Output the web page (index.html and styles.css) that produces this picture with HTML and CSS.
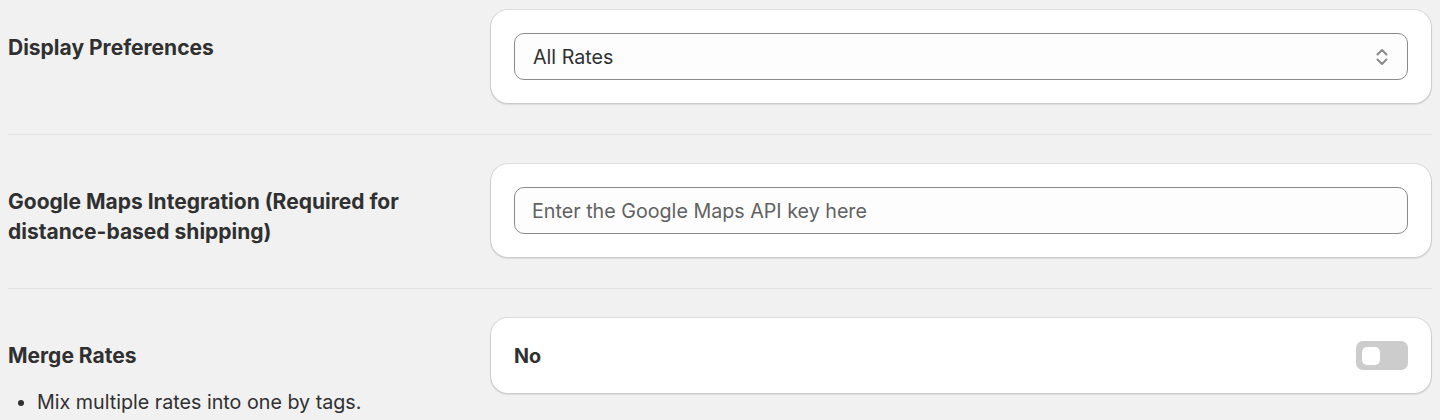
FILE: index.html
```html
<!DOCTYPE html>
<html lang="en">
  <head>
    <meta charset="UTF-8" />
    <meta name="viewport" content="width=device-width, initial-scale=1.0" />
    <title>Settings</title>
    <link rel="stylesheet" href="styles.css">
  </head>
  <body>
    <div class="settings">
      <section class="setting">
        <div class="setting-info">
          <h2>Display Preferences</h2>
        </div>
        <div class="card">
          <div class="select">
            <span>All Rates</span>
            <svg class="chevron" width="14" height="20" viewBox="0 0 14 20">
              <path d="M2.5 7.5 7 3 11.5 7.5" />
              <path d="M2.5 12.5 7 17 11.5 12.5" />
            </svg>
          </div>
        </div>
      </section>
      <section class="setting">
        <div class="setting-info">
          <h2>Google Maps Integration (Required for distance-based shipping)</h2>
        </div>
        <div class="card">
          <input class="text-field" type="text" placeholder="Enter the Google Maps API key here" />
        </div>
      </section>
      <section class="setting">
        <div class="setting-info">
          <h2>Merge Rates</h2>
          <ul>
            <li>Mix multiple rates into one by tags.</li>
          </ul>
        </div>
        <div class="card toggle-card">
          <strong>No</strong>
          <span class="toggle"><span class="knob"></span></span>
        </div>
      </section>
    </div>
  </body>
</html>
```

FILE: styles.css
```css
* {
  box-sizing: border-box;
  font-family: Inter, "Noto Sans", sans-serif;
}
html,
body {
  margin: 0;
  background-color: #f1f1f1;
  color: #303030;
}
.settings {
  padding: 10px 8px 0 8px;
}
.setting {
  display: grid;
  grid-template-columns: 463px 1fr;
  align-items: start;
  gap: 20px;
  padding-bottom: 31px;
  border-bottom: 1px solid #e1e1e1;
  margin-bottom: 29px;
}
.setting:last-child {
  border-bottom: none;
}
.setting-info h2 {
  margin: 0;
  padding-top: 23px;
  font-size: 21px;
  line-height: 30px;
  font-weight: 700;
}
.setting-info ul {
  margin: 18px 0 0 0;
  padding-left: 29px;
  font-size: 19.7px;
  line-height: 26px;
}
.card {
  background: #fff;
  border-radius: 17px;
  padding: 23px;
  box-shadow: 0 0 0 1px rgba(0, 0, 0, 0.07), 0 1px 1px 1px rgba(0, 0, 0, 0.09);
  margin-right: 1px;
}
.select {
  display: flex;
  align-items: center;
  justify-content: space-between;
  height: 47px;
  padding: 0 18px;
  border: 1px solid #8a8a8a;
  border-radius: 10px;
  background: #fdfdfd;
  font-size: 19.7px;
}
.chevron path {
  fill: none;
  stroke: #8a8a8a;
  stroke-width: 2;
  stroke-linecap: round;
  stroke-linejoin: round;
}
.text-field {
  display: block;
  width: 100%;
  height: 47px;
  padding: 0 17px;
  border: 1px solid #8a8a8a;
  border-radius: 10px;
  background: #fdfdfd;
  font-size: 19.7px;
  color: #303030;
  outline: none;
}
.text-field::placeholder {
  color: #616161;
}
.toggle-card {
  display: flex;
  align-items: center;
  justify-content: space-between;
}
.toggle-card strong {
  font-size: 19.7px;
  font-weight: 700;
}
.toggle {
  display: flex;
  align-items: center;
  width: 52px;
  height: 29px;
  padding: 0 6px;
  border-radius: 7px;
  background: #cccccc;
}
.knob {
  width: 18px;
  height: 18px;
  border-radius: 5px;
  background: #fff;
}
```
